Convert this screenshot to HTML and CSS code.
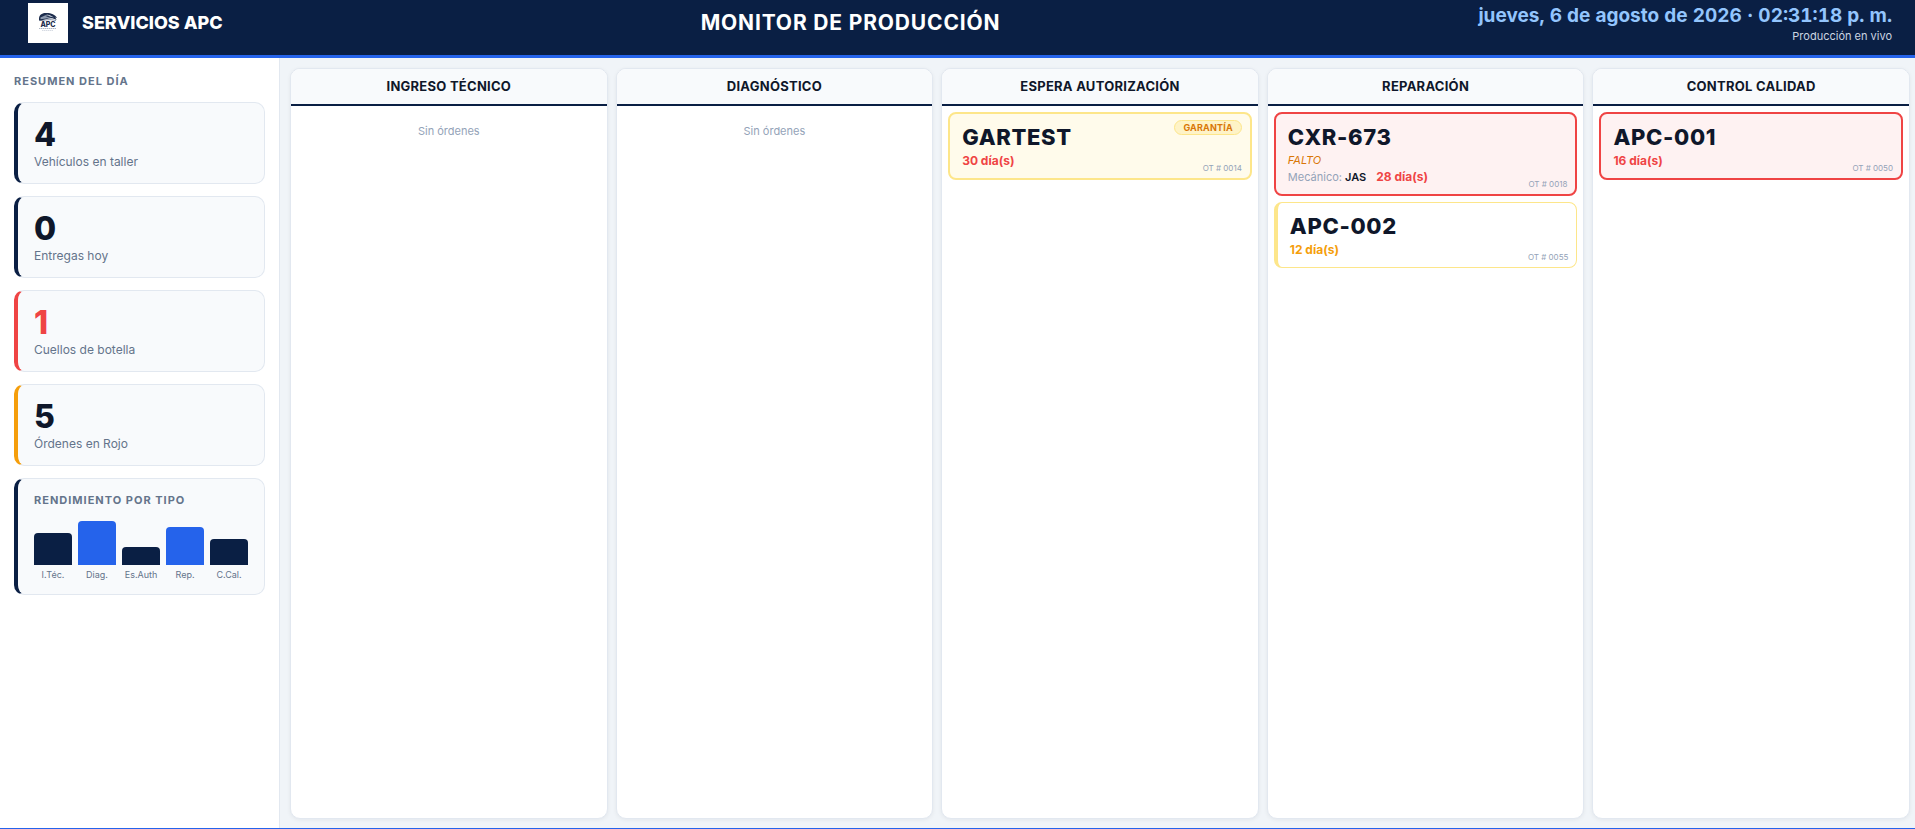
FILE: index.html
```html
<!DOCTYPE html>
<html lang="es">
<head>
<meta charset="utf-8">
<meta name="viewport" content="width=device-width, initial-scale=1">
<title>Monitor de Producción</title>
<link rel="stylesheet" href="styles.css">
</head>
<body>
<header class="topbar">
  <div class="brand">
    <div class="logo">
      <svg viewBox="0 0 40 40" width="40" height="40" role="img" aria-label="APC">
        <path d="M11 15.500c.2-3.200 2.600-5.500 6.500-5.500 5-.3 9.500 1.300 11.500 5l-2.200-.4c1 .6 1.500 1.400 1.700 2.400-3-2-6.500-2.200-10-1-2.600.9-5 1.600-7.500 1.500z" fill="#1d2d4d"/>
        <path d="M12.500 14.500l5-2.200 3.500.3-3.500 1.400 6.500-.2-6 1.600-5.500.8z" fill="#8e9bb0"/>
        <path d="M18 11.300l4 .9 4 2.300-4-1z" fill="#d3dae4"/>
        <path d="M11.500 17.600c5-.2 10-2 16.500 0" fill="none" stroke="#3b4c6c" stroke-width=".6"/>
        <text x="20" y="24" class="logo-name">APC</text>
        <path d="M11 25.500h17" stroke="#9ba5b5" stroke-width=".8" stroke-dasharray="1.500 .5"/>
        <path d="M14 27.500h11" stroke="#ccd2dc" stroke-width=".8" stroke-dasharray="1.500 .5"/>
      </svg>
    </div>
    <span class="brand-name">SERVICIOS APC</span>
  </div>
  <h1 class="title">MONITOR DE PRODUCCIÓN</h1>
  <div class="clock">
    <time class="clock-time">jueves, 6 de agosto de 2026 · 02:31:18 p. m.</time>
    <div class="clock-note">Producción en vivo</div>
  </div>
</header>
<div class="layout">
  <aside class="sidebar">
    <h2 class="section-title">RESUMEN DEL DÍA</h2>
    <div class="stat"><div class="stat-value">4</div><div class="stat-label">Vehículos en taller</div></div>
    <div class="stat"><div class="stat-value">0</div><div class="stat-label">Entregas hoy</div></div>
    <div class="stat stat-danger"><div class="stat-value">1</div><div class="stat-label">Cuellos de botella</div></div>
    <div class="stat stat-warn"><div class="stat-value">5</div><div class="stat-label">Órdenes en Rojo</div></div>
    <div class="stat">
      <h3 class="section-title chart-title">RENDIMIENTO POR TIPO</h3>
      <div class="chart">
        <div class="bar-group"><div class="bar" style="height:32px"></div><span class="bar-label">I.Téc.</span></div>
        <div class="bar-group"><div class="bar bar-alt" style="height:44px"></div><span class="bar-label">Diag.</span></div>
        <div class="bar-group"><div class="bar" style="height:18px"></div><span class="bar-label">Es.Auth</span></div>
        <div class="bar-group"><div class="bar bar-alt" style="height:38px"></div><span class="bar-label">Rep.</span></div>
        <div class="bar-group"><div class="bar" style="height:26px"></div><span class="bar-label">C.Cal.</span></div>
      </div>
    </div>
  </aside>
  <main class="board">
    <section class="column">
      <h2 class="column-title">INGRESO TÉCNICO</h2>
      <div class="column-body"><p class="empty">Sin órdenes</p></div>
    </section>
    <section class="column">
      <h2 class="column-title">DIAGNÓSTICO</h2>
      <div class="column-body"><p class="empty">Sin órdenes</p></div>
    </section>
    <section class="column">
      <h2 class="column-title">ESPERA AUTORIZACIÓN</h2>
      <div class="column-body">
        <article class="card card-warranty">
          <span class="badge">GARANTÍA</span>
          <div class="plate">GARTEST</div>
          <div class="meta"><span class="days">30 día(s)</span></div>
          <span class="order">OT # 0014</span>
        </article>
      </div>
    </section>
    <section class="column">
      <h2 class="column-title">REPARACIÓN</h2>
      <div class="column-body">
        <article class="card card-late">
          <div class="plate">CXR-673</div>
          <div class="note">FALTO</div>
          <div class="meta"><span class="mechanic">Mecánico: <strong>JAS</strong></span><span class="days">28 día(s)</span></div>
          <span class="order">OT # 0018</span>
        </article>
        <article class="card card-watch">
          <div class="plate">APC-002</div>
          <div class="meta"><span class="days">12 día(s)</span></div>
          <span class="order">OT # 0055</span>
        </article>
      </div>
    </section>
    <section class="column">
      <h2 class="column-title">CONTROL CALIDAD</h2>
      <div class="column-body">
        <article class="card card-late">
          <div class="plate">APC-001</div>
          <div class="meta"><span class="days">16 día(s)</span></div>
          <span class="order">OT # 0050</span>
        </article>
      </div>
    </section>
  </main>
</div>
</body>
</html>
```

FILE: styles.css
```css
* { box-sizing: border-box; margin: 0; }

:root {
  --navy: #0a1f44;
  --blue: #2563eb;
  --ink: #0f172a;
  --slate: #64748b;
  --muted: #94a3b8;
  --line: #e2e8f0;
  --red: #ef4444;
  --amber: #f59e0b;
}

body {
  display: flex;
  flex-direction: column;
  height: 100vh;
  font-family: Inter, "Liberation Sans", sans-serif;
  color: var(--ink);
  background: #f0f4f8;
  border-bottom: 1px solid var(--blue);
}

.topbar {
  display: flex;
  align-items: center;
  justify-content: space-between;
  padding: 3px 23px 12px 28px;
  background: var(--navy);
  border-bottom: 3px solid var(--blue);
  color: #fff;
}

.brand { display: flex; align-items: center; gap: 14px; }
.logo { display: flex; width: 40px; height: 40px; background: #fff; }
.logo-name { font-size: 7px; font-weight: 800; text-anchor: middle; fill: #1d2d4d; }
.brand-name { font-size: 18px; line-height: 22px; font-weight: 800; }
.title { font-size: 21px; line-height: 24px; font-weight: 700; letter-spacing: 0.04em; }
.clock { text-align: right; }
.clock-time {
  display: block;
  font-size: 19px;
  line-height: 26px;
  font-weight: 700;
  font-variant-numeric: tabular-nums;
  color: #93c5fd;
}
.clock-note { font-size: 11px; line-height: 14px; color: #cbd5e1; }

.layout { display: flex; flex: 1; min-height: 0; }

.sidebar {
  display: flex;
  flex-direction: column;
  gap: 12px;
  width: 280px;
  flex-shrink: 0;
  padding: 14px;
  background: #fff;
  border-right: 1px solid var(--line);
}

.section-title {
  font-size: 11px;
  line-height: 18px;
  font-weight: 700;
  letter-spacing: 1px;
  color: var(--slate);
}

.stat {
  padding: 14px 16px;
  background: #f8fafc;
  border: 1px solid var(--line);
  border-left: 4px solid var(--navy);
  border-radius: 10px;
}
.stat-value { font-size: 32px; line-height: 36px; font-weight: 800; }
.stat-label { margin-top: 2px; font-size: 12px; line-height: 14px; color: var(--slate); }
.stat-danger { border-left-color: var(--red); }
.stat-danger .stat-value { color: var(--red); }
.stat-warn { border-left-color: var(--amber); }

.chart-title { line-height: 14px; }
.chart { display: flex; align-items: flex-end; gap: 6px; padding-top: 14px; }
.bar-group { flex: 1; min-width: 0; text-align: center; }
.bar { background: var(--navy); border-radius: 4px 4px 0 0; }
.bar-alt { background: var(--blue); }
.bar-label { display: block; margin-top: 4px; font-size: 9px; line-height: 11px; color: var(--slate); }

.board {
  display: grid;
  grid-template-columns: repeat(5, minmax(0, 1fr));
  gap: 8px;
  flex: 1;
  min-width: 0;
  padding: 10px 5px 9px 10px;
}

.column {
  display: flex;
  flex-direction: column;
  overflow: hidden;
  background: #fff;
  border: 1px solid var(--line);
  border-radius: 10px;
  box-shadow: 0 1px 4px rgba(15, 23, 42, .06);
}
.column-title {
  padding: 9px 8px;
  font-size: 13px;
  line-height: 17px;
  font-weight: 700;
  letter-spacing: 0.02em;
  text-align: center;
  background: #f8fafc;
  border-bottom: 2px solid var(--navy);
}
.column-body { display: flex; flex-direction: column; gap: 6px; padding: 6px; }
.empty { padding: 12px 0; font-size: 11px; line-height: 14px; text-align: center; color: var(--muted); }

.card {
  position: relative;
  padding: 8px 12px;
  border: 2px solid var(--line);
  border-radius: 8px;
}
.card-warranty { background: #fffbeb; border-color: #fde68a; }
.card-late { background: #fef2f2; border-color: var(--red); }
.card-watch { border: 1px solid #fde68a; border-left-width: 4px; }

.plate { font-size: 22px; line-height: 30px; font-weight: 800; letter-spacing: 0.03em; }
.note { font-size: 11px; line-height: 16px; font-style: italic; color: #d97706; }
.meta { display: flex; align-items: center; gap: 10px; font-size: 12px; line-height: 18px; }
.mechanic { font-size: 11px; color: var(--muted); }
.mechanic strong { font-weight: 600; color: var(--ink); }
.days { font-weight: 700; color: var(--red); }
.card-watch .days { color: var(--amber); }

.badge {
  position: absolute;
  top: 6px;
  right: 8px;
  padding: 0 8px;
  font-size: 9px;
  line-height: 13px;
  font-weight: 700;
  letter-spacing: 0.02em;
  color: #d97706;
  background: #fef3c7;
  border: 1px solid #fde68a;
  border-radius: 8px;
}
.order { position: absolute; right: 8px; bottom: 5px; font-size: 8px; line-height: 10px; color: var(--muted); }
```
